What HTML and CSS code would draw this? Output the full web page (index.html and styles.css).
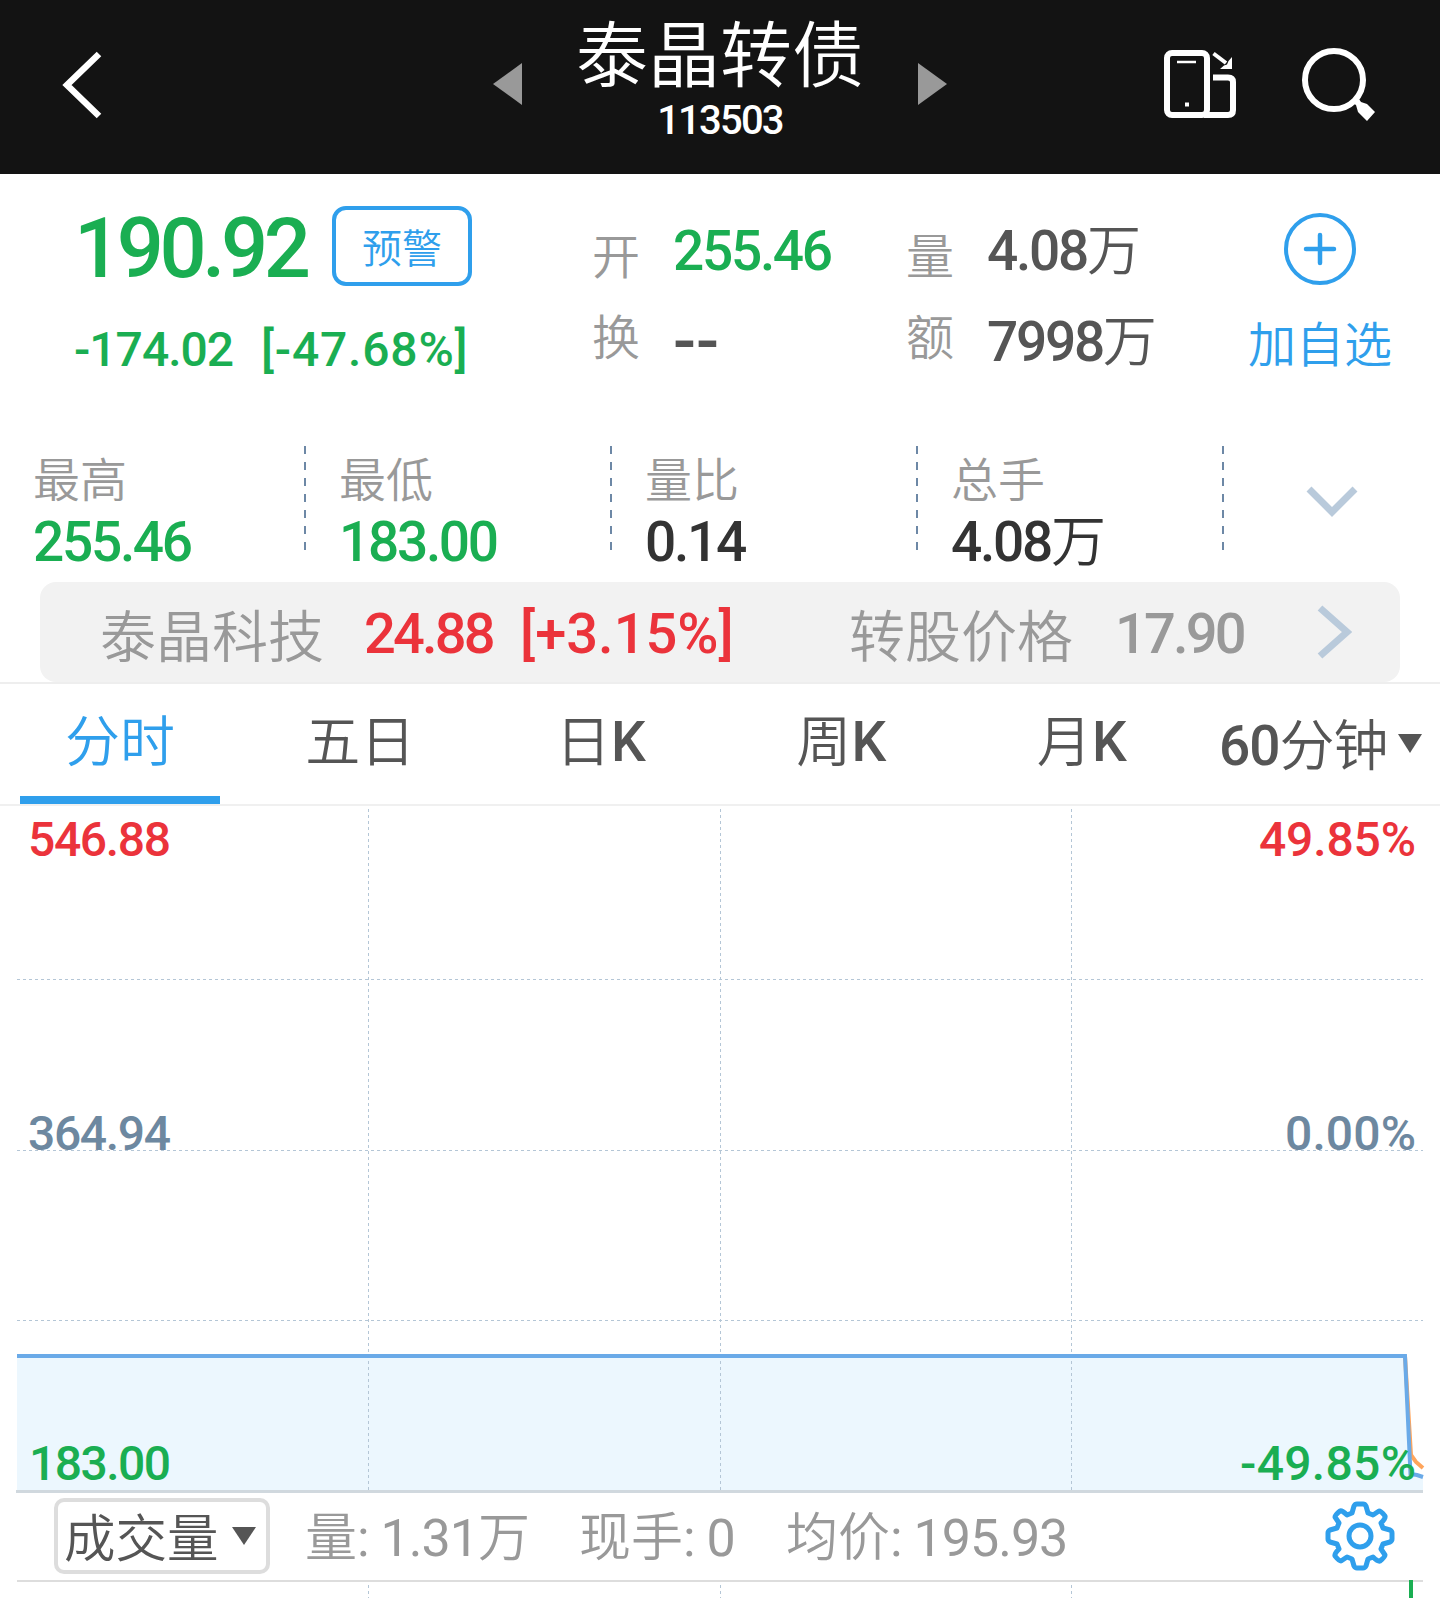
FILE: index.html
```html
<!DOCTYPE html>
<html lang="zh-CN">
<head>
    <meta charset="UTF-8">
    <meta name="viewport" content="width=device-width, initial-scale=1.0">
    <title>泰晶转债 113503</title>
    <link rel="stylesheet" href="styles.css">
</head>
<body>

<header class="header">
    <svg class="back" width="44" height="72" viewBox="0 0 44 72"><path d="M39 4L7 35L39 66" fill="none" stroke="#fff" stroke-width="6.500"/></svg>
    <div class="switcher">
        <svg width="30" height="42" viewBox="0 0 30 42"><path d="M29 0V42L0 21Z" fill="#999"/></svg>
        <div class="title">
            <h1>泰晶转债</h1>
            <p>113503</p>
        </div>
        <svg width="30" height="42" viewBox="0 0 30 42"><path d="M1 0V42L30 21Z" fill="#999"/></svg>
    </div>
    <div class="actions">
        <svg width="74" height="72" viewBox="0 0 74 72" fill="none" stroke="#fff" stroke-width="6">
            <rect x="4" y="6" width="40" height="62" rx="5"/>
            <path d="M50 30.500H65Q70 30.500 70 35V63Q70 68 65 68H41"/>
            <path d="M14 15H33" stroke-width="2.500"/>
            <path d="M22 57.500H26" stroke-width="4"/>
            <path d="M50.500 6.500L63 16" stroke-width="4"/>
            <path d="M69 10V22H57L61 18.500L64 17.500L65.500 14Z" fill="#fff" stroke="none"/>
        </svg>
        <svg width="74" height="74" viewBox="0 0 74 74">
            <circle cx="33" cy="33" r="29" fill="none" stroke="#fff" stroke-width="6"/>
            <path d="M50 55L56 49L60 55L66 57L74 65L66 74L57 65L55 58Z" fill="#fff"/>
        </svg>
    </div>
</header>

<section class="quote">
    <div class="price">
        <div class="price-top">
            <span class="last">190.92</span>
            <button class="alert">预警</button>
        </div>
        <div class="change"><span class="diff">-174.02</span><span class="rate">[-47.68%]</span></div>
    </div>
    <div class="labels"><div>开</div><div>换</div></div>
    <div class="values open"><div class="green">255.46</div><div class="empty">--</div></div>
    <div class="labels"><div>量</div><div>额</div></div>
    <div class="values"><div>4.08<span class="cn">万</span></div><div>7998<span class="cn">万</span></div></div>
    <div class="watch">
        <svg width="72" height="72" viewBox="0 0 72 72" fill="none" stroke="#2f9fec" stroke-width="4">
            <circle cx="36" cy="36" r="34"/>
            <path d="M36 22V50M22 36H50" stroke-width="4.500" stroke-linecap="round"/>
        </svg>
        <span>加自选</span>
    </div>
</section>

<section class="stats">
    <div class="stat"><p>最高</p><b class="green">255.46</b></div>
    <div class="stat"><p>最低</p><b class="green">183.00</b></div>
    <div class="stat"><p>量比</p><b>0.14</b></div>
    <div class="stat"><p>总手</p><b>4.08<span class="cn">万</span></b></div>
    <div class="more"><svg width="52" height="34" viewBox="0 0 52 34"><path d="M3 4L26 27L49 4" fill="none" stroke="#b9cadb" stroke-width="7"/></svg></div>
</section>

<section class="stock">
    <span class="stock-name">泰晶科技</span>
    <span class="stock-price">24.88</span>
    <span class="stock-rate">[+3.15%]</span>
    <span class="convert">转股价格</span>
    <span class="convert-price">17.90</span>
    <svg width="36" height="56" viewBox="0 0 36 56"><path d="M4 4L31 28L4 52" fill="none" stroke="#b9cadb" stroke-width="7"/></svg>
</section>

<nav class="tabs">
    <div class="tab active">分时</div>
    <div class="tab">五日</div>
    <div class="tab">日<b>K</b></div>
    <div class="tab">周<b>K</b></div>
    <div class="tab">月<b>K</b></div>
    <div class="tab period"><b>60</b>分钟<svg width="24" height="19" viewBox="0 0 24 19"><path d="M0 0H24L12 19Z" fill="#555"/></svg></div>
</nav>

<!-- 分时图 -->
<svg class="chart" width="1440" height="688" viewBox="0 806 1440 688">
    <path class="area" d="M17 1356H1405L1410 1474L1423 1477V1490H17Z"/>
    <g class="grid">
        <path d="M368.500 809V1490M720.500 809V1490M1071.500 809V1490"/>
        <path d="M17 979.500H1423M17 1150.500H1423M17 1320.500H1423"/>
    </g>
    <path class="axis" d="M16 1491.500H1423"/>
    <path class="avg" d="M1405 1356L1411 1455L1416 1462L1423 1468"/>
    <path class="line" d="M17 1356H1405L1410.500 1474L1417 1475L1423 1477"/>
    <text class="up" x="28" y="856" textLength="143">546.88</text>
    <text class="up" x="1259" y="856" textLength="157">49.85%</text>
    <text class="flat" x="28" y="1150" textLength="143">364.94</text>
    <text class="flat" x="1285" y="1150" textLength="131">0.00%</text>
    <text class="down" x="29" y="1480" textLength="142">183.00</text>
    <text class="down" x="1240" y="1480" textLength="176">-49.85%</text>
</svg>

<div class="indicator">
    <div class="select">成交量<svg width="24" height="18" viewBox="0 0 24 18"><path d="M0 0H24L12 18Z" fill="#555"/></svg></div>
    <span class="vol">量<b>: 1.31</b>万</span>
    <span class="hand">现手<b>: 0</b></span>
    <span class="mean">均价<b>: 195.93</b></span>
    <svg class="gear" width="72" height="72" viewBox="-36 -36 72 72" fill="none" stroke="#2f9fec" stroke-width="5" stroke-linejoin="round">
        <circle r="11"/>
        <path d="M-6 -30Q-5 -32 -3 -32H3Q5 -32 6 -30L8 -23L13 -21L19 -25Q21 -25 25 -20Q26 -18 21 -13L23 -8L30 -6Q32 -5 32 -3V3Q32 5 30 6L23 8L21 13L25 19Q25 21 20 25Q18 26 13 21L8 23L6 30Q5 32 3 32H-3Q-5 32 -6 30L-8 23L-13 21L-19 25Q-21 25 -25 20Q-26 18 -21 13L-23 8L-30 6Q-32 5 -32 3V-3Q-32 -5 -30 -6L-23 -8L-21 -13L-25 -19Q-25 -21 -20 -25Q-18 -26 -13 -21L-8 -23Z"/>
    </svg>
</div>

<!-- 成交量图 -->
<svg class="chart" width="1440" height="18" viewBox="0 1580 1440 18">
    <path class="split" d="M17 1581H1423"/>
    <path class="grid" d="M368.500 1585V1598M720.500 1585V1598M1071.500 1585V1598"/>
    <path d="M1411 1580V1598" stroke="#1aae52" stroke-width="4"/>
</svg>

</body>
</html>
```
FILE: styles.css
```css
* {
    box-sizing: border-box;
    margin: 0;
    padding: 0;
}

body {
    width: 1440px;
    height: 1598px;
    overflow: hidden;
    background-color: #fff;
    color: #555;
    font-family: Roboto, "Noto Sans CJK SC", sans-serif;
    font-weight: 350;
}

svg {
    display: block;
    flex: none;
}

b {
    font-weight: 500;
}

.cn {
    font-weight: 350;
    letter-spacing: 0;
}

.green {
    color: #1aae52;
}

/* header */
.header {
    display: grid;
    grid-template-columns: 1fr 460px 1fr;
    height: 174px;
    background-color: #131313;
    color: #fff;
}

.back {
    margin: 50px 0 0 60px;
}

.switcher {
    display: flex;
    justify-content: space-between;
    padding: 0 3px;
}

.switcher svg {
    margin-top: 63px;
}

.title {
    text-align: center;
}

.title h1 {
    font-size: 72px;
    font-weight: 350;
    line-height: 80px;
    margin-top: 17px;
}

.title p {
    font-size: 40px;
    font-weight: 500;
    line-height: 40px;
    letter-spacing: -1.8px;
    margin-top: 4px;
}

.actions {
    display: flex;
    justify-content: flex-end;
    gap: 64px;
    padding: 47px 65px 0 0;
}

/* quote */
.quote {
    display: flex;
    height: 272px;
    padding-top: 32px;
}

.price {
    width: 592px;
    padding-left: 74px;
    color: #1aae52;
    font-weight: 500;
}

.price-top {
    display: flex;
}

.last {
    width: 258px;
    font-size: 83px;
    line-height: 86px;
    letter-spacing: -4.4px;
}

.alert {
    width: 140px;
    height: 80px;
    border: 4px solid #2f9fec;
    border-radius: 14px;
    background: none;
    color: #2f9fec;
    font: inherit;
    font-size: 40px;
    font-weight: 350;
}

.change {
    display: flex;
    font-size: 48px;
    line-height: 60px;
    margin-top: 28px;
    letter-spacing: -1px;
}

.diff {
    width: 187px;
}

.rate {
    letter-spacing: 0.8px;
}

.labels {
    width: 81px;
    padding-top: 11px;
    color: #999;
    font-size: 48px;
    line-height: 81px;
}

.values {
    width: 263px;
    font-size: 55px;
    font-weight: 500;
    line-height: 91px;
    letter-spacing: -2.3px;
}

.values.open {
    width: 233px;
}

.values .empty {
    font-size: 68px;
    letter-spacing: 0;
}

.values .cn {
    font-size: 54px;
}

.watch {
    display: flex;
    flex-direction: column;
    align-items: center;
    width: 140px;
    padding-top: 7px;
    color: #2f9fec;
    font-size: 48px;
    line-height: 60px;
}

.watch span {
    margin-top: 31px;
    white-space: nowrap;
}

/* stats */
.stats {
    display: flex;
    height: 136px;
}

.stat {
    width: 306px;
    padding-left: 33px;
    background: repeating-linear-gradient(#6d88a6 0 8px, transparent 8px 16px) right top / 2px 104px no-repeat;
}

.stat p {
    color: #999;
    font-size: 47px;
    line-height: 60px;
    padding-top: 5px;
}

.stat b {
    display: block;
    font-size: 55px;
    line-height: 60px;
    letter-spacing: -2.3px;
    margin-top: 1px;
}

.stat b:not(.green) {
    color: #333;
}

.more {
    padding: 39px 0 0 82px;
}

/* stock strip */
.stock {
    display: flex;
    align-items: center;
    height: 100px;
    margin: 0 40px;
    padding-left: 60px;
    border-radius: 16px;
    background-color: #f2f2f2;
    color: #999;
    font-size: 56px;
    white-space: nowrap;
}

.stock-name {
    width: 264px;
}

.stock-price,
.stock-rate,
.convert-price {
    padding-top: 3px;
    font-weight: 500;
    letter-spacing: -2.8px;
}

.stock-price,
.stock-rate {
    color: #eb333b;
}

.stock-price {
    width: 156px;
}

.stock-rate {
    width: 329px;
    letter-spacing: 0;
}

.convert {
    width: 266px;
}

.convert-price {
    width: 201px;
}

/* tabs */
.tabs {
    display: flex;
    height: 124px;
    border-top: 2px solid #eee;
    border-bottom: 2px solid #f0f0f0;
}

.tab {
    width: 240.5px;
    padding-top: 23px;
    font-size: 55px;
    line-height: 70px;
    text-align: center;
    white-space: nowrap;
}

.tab.active {
    width: 200px;
    margin: 0 20px 0 20px;
    border-bottom: 8px solid #2f9fec;
    color: #2f9fec;
}

.tab.period {
    display: flex;
    width: 236px;
    padding-top: 27px;
    padding-left: 17px;
    letter-spacing: -1px;
}

.period svg {
    margin: 23px 0 0 10px;
}

/* charts */
.chart .area {
    fill: #ecf7fe;
}

.chart .grid {
    fill: none;
    stroke: #b4c6d6;
    stroke-width: 1;
    stroke-dasharray: 3 3;
}

.chart .axis {
    stroke: #d0d8de;
    stroke-width: 3;
}

.chart .split {
    stroke: #ddd;
    stroke-width: 2;
}

.chart .avg,
.chart .line {
    fill: none;
    stroke: #6aaae8;
    stroke-width: 4;
}

.chart .avg {
    stroke: #ffa55c;
}

.chart text {
    font-size: 48px;
    font-weight: 500;
}

.up {
    fill: #eb333b;
}

.flat {
    fill: #6d88a0;
}

.down {
    fill: #1aae52;
}

/* indicator bar */
.indicator {
    display: flex;
    height: 86px;
    padding: 4px 0 0 54px;
    color: #999;
    font-size: 52px;
    line-height: 82px;
    white-space: nowrap;
}

.indicator b {
    font-weight: 450;
    letter-spacing: -1px;
}

.select {
    display: flex;
    width: 216px;
    height: 76px;
    padding-left: 6px;
    border: 4px solid #ddd;
    border-radius: 10px;
    color: #555;
    font-size: 51.5px;
    line-height: 75px;
}

.select svg {
    margin: 25px 0 0 13px;
}

.vol {
    width: 274px;
    margin-left: 35px;
}

.hand {
    width: 207px;
}

.mean {
    width: 538px;
}

.gear {
    margin-top: 2px;
}
```
